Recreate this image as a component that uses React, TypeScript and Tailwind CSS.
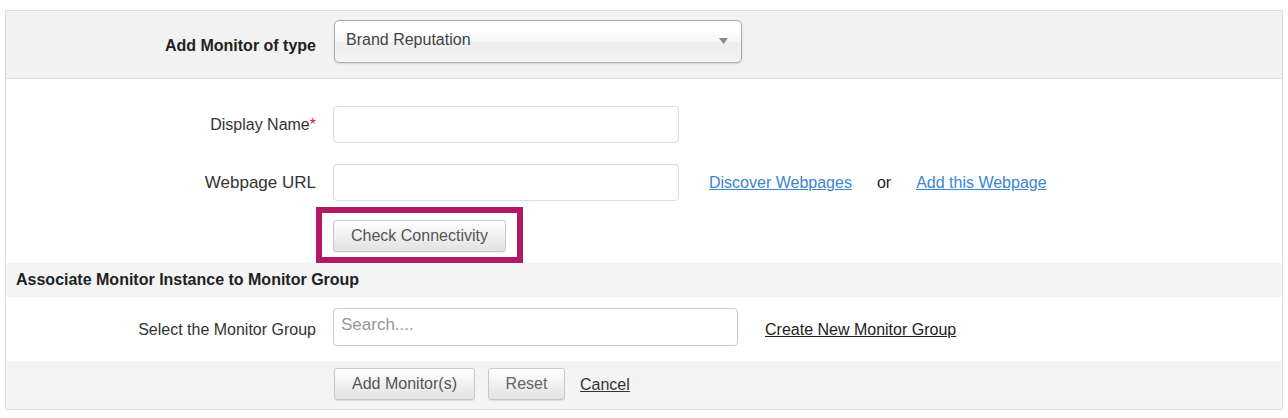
const font = { fontFamily: '"Liberation Sans", Arial, sans-serif' };

function TextInput({ width, placeholder }: { width: string; placeholder?: string }) {
  return (
    <input
      type="text"
      placeholder={placeholder}
      className={`${width} h-[37px] rounded-[4px] border border-[#dcdcdc] bg-white px-[8px] text-[16px] text-[#333] outline-none placeholder:text-[#999]`}
    />
  );
}

function GrayButton({ label, width, tone = 'text-[#555]' }: { label: string; width: string; tone?: string }) {
  return (
    <button
      className={`${width} ${tone} h-[32px] rounded-[3px] border border-[#c8c8c8] bg-gradient-to-b from-white to-[#e2e2e2] text-[16px] shadow-[0_1px_1px_rgba(0,0,0,0.08)]`}
    >
      {label}
    </button>
  );
}

function FieldLabel({ children, className = '' }: { children: React.ReactNode; className?: string }) {
  return <div className={`w-[310px] shrink-0 text-right text-[#333] ${className}`}>{children}</div>;
}

export default function App() {
  return (
    <div className="min-h-[418px] bg-white pt-[10px] pl-[5px]" style={font}>
      <div className="flex w-[1278px] flex-col border border-[#dedede]">
        {/* monitor type picker */}
        <div className="flex h-[68px] items-start border-b border-[#dedede] bg-[#f2f2f2] pt-[9px]">
          <FieldLabel className="mt-[14px] text-[16px] font-bold !text-[#222]">Add Monitor of type</FieldLabel>
          <div className="ml-[18px] flex h-[43px] w-[408px] items-start justify-between rounded-[5px] border border-[#aaa] bg-[linear-gradient(#fff_20%,#f6f6f6_50%,#eee_52%,#f4f4f4_100%)] pt-[10px] pl-[11px] pr-[13px] shadow-[0_1px_2px_rgba(0,0,0,0.12)]">
            <span className="text-[16px] leading-[18px] text-[#444]">Brand Reputation</span>
            <svg width="9" height="6" viewBox="0 0 9 6" className="mt-[7px]">
              <path d="M0 0h9L4.5 6z" fill="#888" />
            </svg>
          </div>
        </div>

        {/* name + url */}
        <div className="flex h-[184px] flex-col bg-white pt-[27px]">
          <div className="flex items-center">
            <FieldLabel className="text-[16px]">
              Display Name<span className="text-[#e02020]">*</span>
            </FieldLabel>
            <div className="ml-[17px]">
              <TextInput width="w-[346px]" />
            </div>
          </div>
          <div className="mt-[21px] flex items-center">
            <FieldLabel className="text-[17px]">Webpage URL</FieldLabel>
            <div className="ml-[17px]">
              <TextInput width="w-[346px]" />
            </div>
            <a href="#" className="ml-[30px] text-[16px] text-[#3b86cc] underline">
              Discover Webpages
            </a>
            <span className="ml-[25px] text-[16px] text-[#222]">or</span>
            <a href="#" className="ml-[25px] text-[16px] text-[#3b86cc] underline">
              Add this Webpage
            </a>
          </div>
          <div className="mt-[19px] flex">
            <div className="relative ml-[327px]">
              <GrayButton label="Check Connectivity" width="w-[173px]" />
              <div className="pointer-events-none absolute left-[-17px] top-[-13px] h-[56px] w-[207px] border-[6px] border-[#b11862]" />
            </div>
          </div>
        </div>

        {/* group section */}
        <div className="flex h-[34px] items-center bg-[#f4f4f4] pl-[10px] text-[16px] font-bold text-[#222]">
          Associate Monitor Instance to Monitor Group
        </div>
        <div className="flex h-[64px] items-start bg-white pt-[11px]">
          <FieldLabel className="mt-[10px] text-[16px]">Select the Monitor Group</FieldLabel>
          <div className="ml-[17px]">
            <input
              type="text"
              placeholder="Search...."
              className="h-[38px] w-[405px] rounded-[4px] border border-[#ccc] bg-white px-[7px] pb-[4px] text-[17px] outline-none placeholder:text-[#999]"
            />
          </div>
          <a href="#" className="ml-[27px] mt-[10px] text-[16px] text-[#222] underline">
            Create New Monitor Group
          </a>
        </div>

        {/* actions */}
        <div className="flex h-[48px] items-start bg-[#f4f4f4] pt-[7px] pl-[328px]">
          <GrayButton label="Add Monitor(s)" width="w-[141px]" />
          <div className="ml-[13px]">
            <GrayButton label="Reset" width="w-[77px]" tone="text-[#666]" />
          </div>
          <a href="#" className="ml-[15px] mt-[5px] text-[16px] text-[#333] underline">
            Cancel
          </a>
        </div>
      </div>
    </div>
  );
}
